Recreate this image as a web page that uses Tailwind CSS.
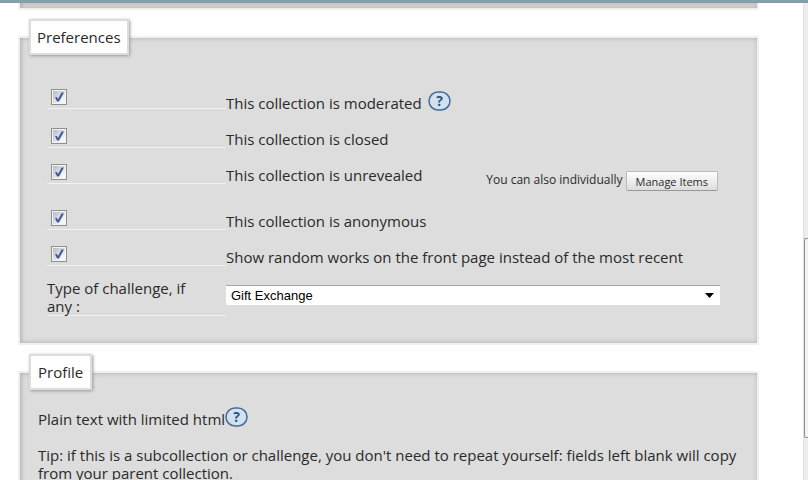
<!DOCTYPE html>
<html lang="en">
  <head>
    <meta charset="UTF-8" />
    <meta name="viewport" content="width=device-width, initial-scale=1.0" />
    <title>Edit Collection</title>
    <script src="https://cdn.jsdelivr.net/npm/@tailwindcss/browser@4"></script>
    <style>
      body {
        font-family: "Open Sans", "Noto Sans", sans-serif;
      }
      fieldset {
        border: 2px solid #f3efec;
        background: #ddd;
        box-shadow: inset 1px 0 5px #aaa;
      }
      legend {
        border: 2px solid #ddd;
        background: #fff;
        box-shadow: 1px 1px 3px #999;
      }
      input[type="checkbox"] {
        appearance: none;
        width: 16px;
        height: 16px;
        border: 1px solid #8e8f8f;
        background: linear-gradient(135deg, #b4bac4, #f6f6f6 80%) center / 12px 12px no-repeat #f4f4f4;
      }
    </style>
  </head>
  <body class="bg-white h-screen overflow-hidden flex flex-col text-[15px] leading-[18px] text-[#2a2a2a]">
    <header class="h-[3px] shrink-0 bg-[#84a0ae] border-b border-[#8d979f]"></header>
    <div class="flex flex-1 min-h-0">
      <main class="flex-1 pl-[18px] pr-[44px]">
        <fieldset class="h-[7px] border-t-0!"></fieldset>

        <fieldset class="mt-[9px] px-[18px] pb-[27px]">
          <legend class="-ml-[9px] h-9 px-[6px] py-[7px]">Preferences</legend>
          <div class="mt-[26px] px-[9px]">
            <div class="flex h-[39px] items-start">
              <div class="relative w-[179px] h-7 pt-2 pl-1 border-b border-[#f2f2f2]">
                <input type="checkbox" id="moderated" class="block" checked />
                <svg class="absolute left-1 top-2 pointer-events-none" width="16" height="16" viewBox="0 0 16 16"><path d="M4 8h2l1 2 3.500-6.500H13L8 12.500H6z" fill="#435b9d" /></svg>
              </div>
              <div class="flex-1 pt-[10px]">
                <label for="moderated">This collection is moderated</label>
                <button type="button" aria-label="Help" class="ml-[2px] align-[-2px]">
                  <svg class="block" width="23" height="20" viewBox="0 0 23 20"><rect x="1" y="1" width="21" height="18" rx="9" fill="#d1e1ef" stroke="#446b95" stroke-width="1.500" /><text x="11.500" y="15" text-anchor="middle" font-size="14" font-weight="bold" fill="#2a547c">?</text></svg>
                </button>
              </div>
            </div>
            <div class="flex h-9 items-start">
              <div class="relative w-[179px] h-7 pt-2 pl-1 border-b border-[#f2f2f2]">
                <input type="checkbox" id="closed" class="block" checked />
                <svg class="absolute left-1 top-2 pointer-events-none" width="16" height="16" viewBox="0 0 16 16"><path d="M4 8h2l1 2 3.500-6.500H13L8 12.500H6z" fill="#435b9d" /></svg>
              </div>
              <label for="closed" class="flex-1 pt-[10px]">This collection is closed</label>
            </div>
            <div class="flex h-[46px] items-start">
              <div class="relative w-[179px] h-7 pt-2 pl-1 border-b border-[#f2f2f2]">
                <input type="checkbox" id="unrevealed" class="block" checked />
                <svg class="absolute left-1 top-2 pointer-events-none" width="16" height="16" viewBox="0 0 16 16"><path d="M4 8h2l1 2 3.500-6.500H13L8 12.500H6z" fill="#435b9d" /></svg>
              </div>
              <label for="unrevealed" class="flex-1 pt-[10px]">This collection is unrevealed</label>
              <p class="mt-[15px] mr-3 flex gap-[3px] text-[12px]">
                <span>You can also individually</span>
                <button type="button" class="h-5 px-[9px] pt-[2px] text-[11px] leading-4 rounded-[2px] border border-[#bbb] border-b-[#999] bg-linear-to-b from-white to-[#ddd]">Manage Items</button>
              </p>
            </div>
            <div class="flex h-9 items-start">
              <div class="relative w-[179px] h-7 pt-2 pl-1 border-b border-[#f2f2f2]">
                <input type="checkbox" id="anonymous" class="block" checked />
                <svg class="absolute left-1 top-2 pointer-events-none" width="16" height="16" viewBox="0 0 16 16"><path d="M4 8h2l1 2 3.500-6.500H13L8 12.500H6z" fill="#435b9d" /></svg>
              </div>
              <label for="anonymous" class="flex-1 pt-[10px]">This collection is anonymous</label>
            </div>
            <div class="flex h-[41px] items-start">
              <div class="relative w-[179px] h-7 pt-2 pl-1 border-b border-[#f2f2f2]">
                <input type="checkbox" id="random" class="block" checked />
                <svg class="absolute left-1 top-2 pointer-events-none" width="16" height="16" viewBox="0 0 16 16"><path d="M4 8h2l1 2 3.500-6.500H13L8 12.500H6z" fill="#435b9d" /></svg>
              </div>
              <label for="random" class="flex-1 pt-[10px]">Show random works on the front page instead of the most recent</label>
            </div>
            <div class="flex items-start">
              <label for="challenge" class="w-[179px] pr-6 border-b border-[#f2f2f2]">Type of challenge, if any :</label>
              <div class="relative flex-1 mt-[6px] mr-[10px]">
                <select id="challenge" class="block w-full h-5 pl-[5px] appearance-none bg-white border-t border-[#a5a5a5] text-black text-[13px] leading-[18px] font-['Liberation_Sans',sans-serif]">
                  <option>Gift Exchange</option>
                </select>
                <svg class="absolute right-[6px] top-2 pointer-events-none" width="9" height="5" viewBox="0 0 9 5"><path d="M0 0h9L4.500 5z" fill="#000" /></svg>
              </div>
            </div>
          </div>
        </fieldset>

        <fieldset class="mt-[9px] px-[18px] pb-[27px]">
          <legend class="-ml-[9px] h-9 px-[7px] py-[7px]">Profile</legend>
          <p class="mt-[17px]">
            Plain text with limited html
            <button type="button" aria-label="Help" class="-ml-1 align-[-2px]">
              <svg class="block" width="23" height="20" viewBox="0 0 23 20"><rect x="1" y="1" width="21" height="18" rx="9" fill="#d1e1ef" stroke="#446b95" stroke-width="1.500" /><text x="11.500" y="15" text-anchor="middle" font-size="14" font-weight="bold" fill="#2a547c">?</text></svg>
            </button>
          </p>
          <p class="mt-[18px]">
            Tip: if this is a subcollection or challenge, you don't need to repeat yourself: fields left blank will copy from your parent collection.
          </p>
        </fieldset>
      </main>
      <div class="w-[5px] bg-[#ededed] border-l border-[#e2e2e2] pt-[235px]">
        <div class="h-[200px] rounded-l-[2px] border border-r-0 border-[#8f8f8f] bg-[#f3f3f3]"></div>
      </div>
    </div>
  </body>
</html>
